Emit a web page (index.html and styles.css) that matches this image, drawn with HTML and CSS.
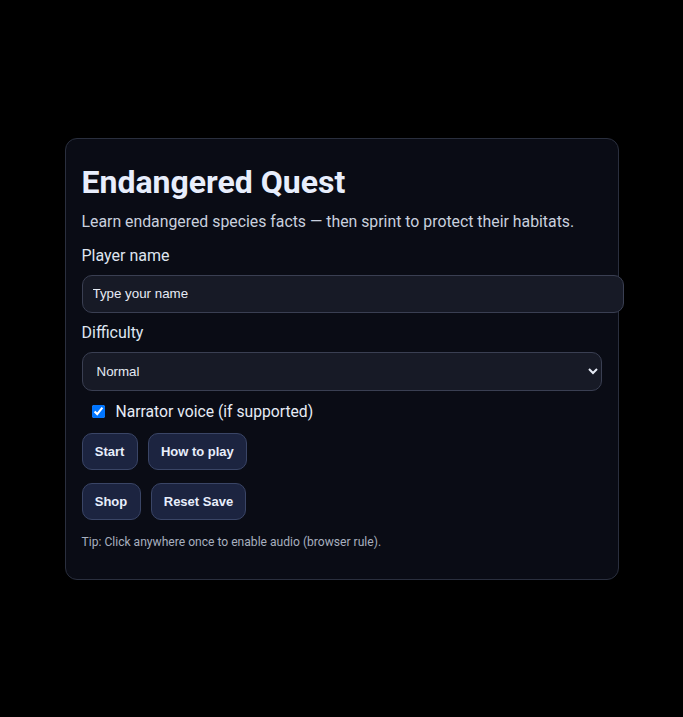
FILE: index.html
```html
<!DOCTYPE html>
<html lang="en">
<head>
<meta charset="utf-8">
<title>Endangered Quest</title>
<link rel="stylesheet" href="styles.css">
</head>
<body>
<main class="screen">
  <section class="card">
    <h1 class="title">Endangered Quest</h1>
    <p class="subtitle">Learn endangered species facts — then sprint to protect their habitats.</p>
    <label class="label" for="name">Player name</label>
    <input class="text-input" id="name" type="text" placeholder="Type your name">
    <label class="label" for="diff">Difficulty</label>
    <select class="select" id="diff">
      <option>Normal</option>
      <option>Easy</option>
      <option>Hard</option>
    </select>
    <label class="check-row"><input type="checkbox" checked> <span>Narrator voice (if supported)</span></label>
    <div class="btn-row">
      <button class="btn">Start</button>
      <button class="btn">How to play</button>
    </div>
    <div class="btn-row">
      <button class="btn">Shop</button>
      <button class="btn">Reset Save</button>
    </div>
    <p class="tip">Tip: Click anywhere once to enable audio (browser rule).</p>
  </section>
</main>
</body>
</html>
```
FILE: styles.css
```css
html, body {
  margin: 0;
  padding: 0;
  background: #000;
  height: 100%;
}
body {
  font-family: Roboto, "Liberation Sans", sans-serif;
  color: #e6ebf5;
}
.screen {
  min-height: 100%;
  display: flex;
  align-items: center;
  justify-content: center;
}
.card {
  width: 520px;
  padding: 16px;
  background: #0a0c15;
  border: 1px solid #2a2f3e;
  border-radius: 12px;
}
.title {
  margin: 8px 0 11px;
  font-size: 32px;
  font-weight: 700;
  color: #e8eefc;
}
.subtitle {
  margin: 0 0 15px;
  font-size: 15.84px;
  color: #c9d0de;
}
.label {
  display: block;
  margin: 0 0 10px;
  font-size: 16px;
  color: #dfe5f0;
}
.text-input {
  display: block;
  width: 100%;
  height: 16px;
  padding: 10px;
  margin: 0 0 10px;
  font-family: "Liberation Sans", Arial, sans-serif;
  font-size: 13.33px;
  line-height: 16px;
  color: #e6ebf5;
  background: #171a26;
  border: 1px solid #3a3f52;
  border-radius: 10px;
}
.text-input::placeholder {
  color: #e6ebf5;
  opacity: 1;
}
.select {
  display: block;
  box-sizing: border-box;
  width: 100%;
  height: 39px;
  padding: 0 10px;
  margin: 0 0 11px;
  font-family: "Liberation Sans", Arial, sans-serif;
  font-size: 13.33px;
  color: #e6ebf5;
  background: #171a26;
  border: 1px solid #3a3f52;
  border-radius: 10px;
}
.check-row {
  display: flex;
  align-items: center;
  gap: 8px;
  padding-left: 6px;
  font-size: 15.7px;
  color: #e6ebf5;
}
.check-row input {
  margin: 3px 3px 3px 4px;
}
.btn-row {
  display: flex;
  gap: 10px;
  margin-top: 12px;
}
.btn-row + .btn-row {
  margin-top: 13px;
}
.btn {
  height: 37px;
  padding: 0 12.25px;
  font-family: "Liberation Sans", Arial, sans-serif;
  font-size: 13px;
  font-weight: 700;
  color: #e8eefc;
  background: #1c2440;
  border: 1px solid #3a4566;
  border-radius: 10px;
}
.tip {
  margin: 15px 0 14px;
  font-size: 12.1px;
  color: #a7afbf;
}
```
